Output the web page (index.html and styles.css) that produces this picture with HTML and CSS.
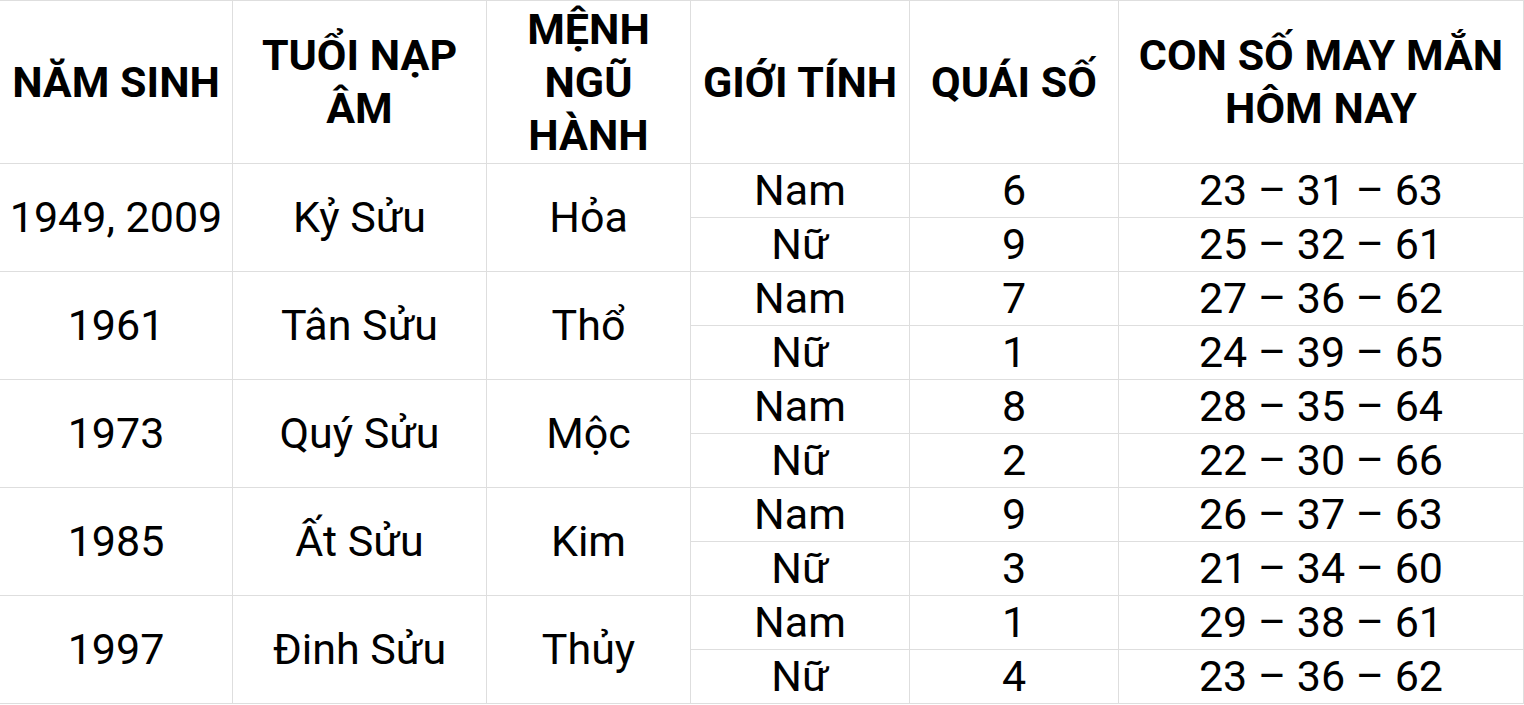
FILE: index.html
```html
<!DOCTYPE html>
<html lang="vi">
<head>
<meta charset="utf-8">
<title>Con số may mắn</title>
<link rel="stylesheet" href="styles.css">
</head>
<body>
<div class="grid" role="table">
  <div class="cell head">NĂM SINH</div>
  <div class="cell head">TUỔI NẠP<br>ÂM</div>
  <div class="cell head">MỆNH<br>NGŨ<br>HÀNH</div>
  <div class="cell head">GIỚI TÍNH</div>
  <div class="cell head">QUÁI SỐ</div>
  <div class="cell head">CON SỐ MAY MẮN<br>HÔM NAY</div>

  <div class="cell span2">1949, 2009</div>
  <div class="cell span2">Kỷ Sửu</div>
  <div class="cell span2">Hỏa</div>
  <div class="cell">Nam</div><div class="cell">6</div><div class="cell">23 – 31 – 63</div>
  <div class="cell">Nữ</div><div class="cell">9</div><div class="cell">25 – 32 – 61</div>

  <div class="cell span2">1961</div>
  <div class="cell span2">Tân Sửu</div>
  <div class="cell span2">Thổ</div>
  <div class="cell">Nam</div><div class="cell">7</div><div class="cell">27 – 36 – 62</div>
  <div class="cell">Nữ</div><div class="cell">1</div><div class="cell">24 – 39 – 65</div>

  <div class="cell span2">1973</div>
  <div class="cell span2">Quý Sửu</div>
  <div class="cell span2">Mộc</div>
  <div class="cell">Nam</div><div class="cell">8</div><div class="cell">28 – 35 – 64</div>
  <div class="cell">Nữ</div><div class="cell">2</div><div class="cell">22 – 30 – 66</div>

  <div class="cell span2">1985</div>
  <div class="cell span2">Ất Sửu</div>
  <div class="cell span2">Kim</div>
  <div class="cell">Nam</div><div class="cell">9</div><div class="cell">26 – 37 – 63</div>
  <div class="cell">Nữ</div><div class="cell">3</div><div class="cell">21 – 34 – 60</div>

  <div class="cell span2">1997</div>
  <div class="cell span2">Đinh Sửu</div>
  <div class="cell span2">Thủy</div>
  <div class="cell">Nam</div><div class="cell">1</div><div class="cell">29 – 38 – 61</div>
  <div class="cell">Nữ</div><div class="cell">4</div><div class="cell">23 – 36 – 62</div>
</div>
</body>
</html>
```

FILE: styles.css
```css
html, body {
  margin: 0;
  padding: 0;
  background: #fff;
}
body {
  font-family: Roboto, "Liberation Sans", sans-serif;
  color: #000;
  overflow: hidden;
}
.grid {
  display: grid;
  grid-template-columns: 232px 253px 203px 218px 208px 404px;
  grid-template-rows: 162px repeat(10, 53px);
  grid-auto-flow: row dense;
  gap: 1px;
  padding: 1px 1px 1px 0;
  width: 1524px;
  box-sizing: border-box;
  background: #dedede;
}
.cell {
  background: #fff;
  display: flex;
  align-items: center;
  justify-content: center;
  text-align: center;
  font-size: 43px;
  line-height: 53px;
  white-space: nowrap;
}
.head {
  font-weight: 700;
  font-size: 43px;
  line-height: 53px;
}
.span2 {
  grid-row: span 2;
}
```
